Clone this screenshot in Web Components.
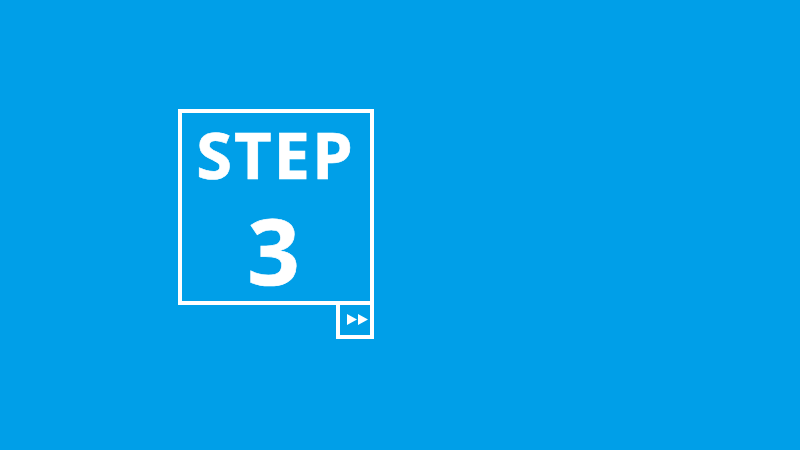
<!DOCTYPE html>
<html>
<head>
<meta charset="utf-8">
<style>
  html, body { margin: 0; height: 100%; background: #009fe8; overflow: hidden; }
  body { display: flex; padding: 109px 0 0 178px; box-sizing: border-box; }
</style>
</head>
<body>
<step-badge step="3"></step-badge>
<script>
// the little box with the two arrows
class SkipButton extends HTMLElement {
  constructor() {
    super();
    this.attachShadow({ mode: 'open' });
  }

  connectedCallback() {
    this.shadowRoot.innerHTML = `
      <style>
        :host {
          display: flex;
          align-items: center;
          justify-content: flex-start;
          width: 38px;
          height: 35px;
          box-sizing: border-box;
          padding: 0 0 0 7px;
          border: 4px solid #fff;
          border-top: none;
          margin-top: -1px;
        }
        svg { display: block; }
      </style>
      <svg width="21" height="11" viewBox="0 0 21 11">
        <path d="M0 0L10 5.5L0 11Z M11 0L21 5.5L11 11Z" fill="#fff"/>
      </svg>
    `;
  }
}

class StepBadge extends HTMLElement {
  constructor() {
    super();
    this.attachShadow({ mode: 'open' });
  }

  connectedCallback() {
    const step = this.getAttribute('step') || '1';
    this.shadowRoot.innerHTML = `
      <style>
        :host {
          display: flex;
          flex-direction: column;
          align-items: flex-end;
          width: 196px;
          font-family: 'Open Sans', sans-serif;
          font-weight: 700;
          color: #fff;
          -webkit-text-stroke: 0.6px #fff;
        }
        .box {
          width: 196px;
          height: 196px;
          box-sizing: border-box;
          border: 4px solid #fff;
          display: flex;
          flex-direction: column;
          align-items: center;
        }
        .word { font-size: 65px; line-height: 56px; margin-top: 13px; letter-spacing: 2px; margin-right: 1px; }
        .num { font-size: 92px; line-height: 72px; margin-top: 32px; margin-right: 5px; }
      </style>
      <div class="box">
        <div class="word">STEP</div>
        <div class="num">${step}</div>
      </div>
      <skip-button></skip-button>
    `;
  }
}

customElements.define('skip-button', SkipButton);
customElements.define('step-badge', StepBadge);
</script>
</body>
</html>
